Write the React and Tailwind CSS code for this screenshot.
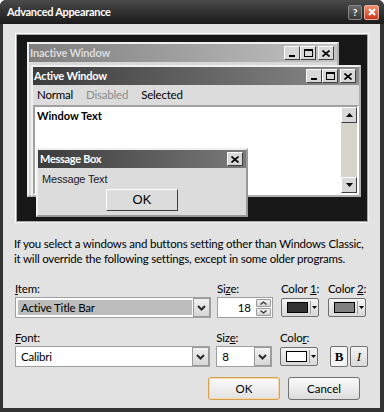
import React from 'react';

const UI = "[font-family:Lato,'Liberation_Sans',sans-serif]";
const CLASSIC = "[font-family:'Liberation_Sans',Arial,sans-serif]";

function CapBtn({ kind }) {
  return (
    <div className="flex h-[14px] w-[16px] items-center justify-center border border-t-white border-l-white border-r-[#404040] border-b-[#404040] bg-[#d8d8d8]">
      {kind === 'min' && (
        <svg width="8" height="7" viewBox="0 0 8 7">
          <rect x="1" y="5" width="6" height="2" fill="#000" />
        </svg>
      )}
      {kind === 'max' && (
        <svg width="9" height="8" viewBox="0 0 9 8">
          <rect x="0.5" y="0.5" width="8" height="7" fill="none" stroke="#000" />
          <rect x="0" y="0" width="9" height="2" fill="#000" />
        </svg>
      )}
      {kind === 'close' && (
        <svg width="8" height="7" viewBox="0 0 8 7">
          <path d="M0.5 0.5 L7.5 6.5 M7.5 0.5 L0.5 6.5" stroke="#000" strokeWidth="1.6" />
        </svg>
      )}
    </div>
  );
}

function ScrollBtn({ down }) {
  return (
    <div className="flex h-[16px] w-[16px] items-center justify-center border border-t-white border-l-white border-r-[#404040] border-b-[#404040] bg-[#d8d8d8]">
      <svg width="7" height="4" viewBox="0 0 7 4">
        <path d={down ? 'M0 0 H7 L3.5 4 Z' : 'M0 4 H7 L3.5 0 Z'} fill="#000" />
      </svg>
    </div>
  );
}

function DropBtn() {
  return (
    <div className="flex h-full w-[17px] items-center justify-center border border-[#9a9a9a] bg-gradient-to-b from-[#f2f2f2] to-[#d6d6d6]">
      <svg width="9" height="6" viewBox="0 0 9 6">
        <path d="M1 1 L4.5 4.5 L8 1" fill="none" stroke="#2a2a2a" strokeWidth="2" />
      </svg>
    </div>
  );
}

function ColorBtn({ color }) {
  return (
    <div className="flex h-[19px] w-[38px] items-center rounded-[2px] border border-[#707070] bg-gradient-to-b from-[#f4f4f4] to-[#d8d8d8] pl-[5px]">
      <div className="h-[11px] w-[21px] border border-black" style={{ background: color }} />
      <div className="ml-[2px] flex h-[13px] w-[8px] items-center justify-center border-l border-[#a0a0a0]">
        <svg width="5" height="3" viewBox="0 0 5 3">
          <path d="M0 0 H5 L2.5 3 Z" fill="#000" />
        </svg>
      </div>
    </div>
  );
}

function Label({ children }) {
  return <div className="h-[15px] whitespace-nowrap text-[11.5px] leading-[15px] tracking-[-0.2px] text-black">{children}</div>;
}

export default function App() {
  return (
    <div className={`${UI} flex h-[412px] w-[384px] flex-col overflow-hidden rounded-t-[6px] bg-[#333333]`}>
      <div className="flex h-[24px] shrink-0 items-center bg-gradient-to-b from-[#4a4a4a] to-[#1c1c1c] pl-[7px] pr-[5px]">
        <span className="text-[11px] font-bold tracking-[-0.3px] text-white">Advanced Appearance</span>
        <div className="ml-auto flex gap-[2px]">
          <div className="flex h-[15px] w-[14px] items-center justify-center rounded-[2px] border border-[#888] bg-gradient-to-b from-[#6a6a6a] to-[#3a3a3a] text-[10px] font-bold leading-none text-white">
            ?
          </div>
          <div className="flex h-[15px] w-[15px] items-center justify-center rounded-[2px] border border-[#e8b0a0] bg-gradient-to-b from-[#f09070] to-[#c83418]">
            <svg width="8" height="8" viewBox="0 0 8 8">
              <path d="M1 1 L7 7 M7 1 L1 7" stroke="#fff" strokeWidth="2" />
            </svg>
          </div>
        </div>
      </div>

      <div className="ml-[3px] mr-[4px] mb-[4px] flex flex-1 flex-col bg-[#e2e2e2] px-[12px] pt-[9px]">
        <div className="h-[190px] w-[354px] shrink-0 border border-t-white border-l-white border-r-[#f0f0f0] border-b-[#f0f0f0]">
          <div className="relative h-full w-full border border-[#a8a8a8] bg-[#171717]">
            <div className="absolute left-[10px] top-[7px] h-[155px] w-[312px] border-2 border-t-[#f0f0f0] border-l-[#f0f0f0] border-r-[#b0b0b0] border-b-[#b0b0b0] bg-[#d8d8d8]">
              <div className="flex h-[18px] items-center bg-gradient-to-r from-[#7e7e7e] to-[#c4c4c4] pl-[1px] pr-[3px]">
                <span className="text-[11px] font-bold tracking-[-0.2px] text-[#dcdcdc]">Inactive Window</span>
                <div className="ml-auto flex">
                  <CapBtn kind="min" />
                  <CapBtn kind="max" />
                  <div className="w-[2px]" />
                  <CapBtn kind="close" />
                </div>
              </div>
            </div>

            <div className="absolute left-[14px] top-[30px] flex h-[132px] w-[330px] flex-col border-2 border-t-[#f0f0f0] border-l-[#f0f0f0] border-r-[#b0b0b0] border-b-[#b0b0b0] bg-[#dcdcdc]">
              <div className="flex h-[18px] items-center bg-gradient-to-r from-[#3c3c3c] to-[#8c8c8c] pl-[1px] pr-[3px]">
                <span className="text-[11px] font-bold tracking-[-0.2px] text-white">Active Window</span>
                <div className="ml-auto flex">
                  <CapBtn kind="min" />
                  <CapBtn kind="max" />
                  <div className="w-[2px]" />
                  <CapBtn kind="close" />
                </div>
              </div>
              <div className="flex h-[20px] items-center gap-[13px] pl-[4px] text-[11.5px] tracking-[-0.2px] text-black">
                <span>Normal</span>
                <span className="text-[#8c8c8c]">Disabled</span>
                <span>Selected</span>
              </div>
              <div className="flex flex-1 border-2 border-t-[#a0a0a0] border-l-[#a0a0a0] border-r-white border-b-white bg-white">
                <div className="flex-1 pl-[2px] pt-[1px] text-[11px] font-bold text-black">Window Text</div>
                <div className="flex w-[16px] flex-col bg-[#d8d4cc]">
                  <ScrollBtn />
                  <div className="flex-1" />
                  <ScrollBtn down />
                </div>
              </div>
            </div>

            <div className="absolute left-[19px] top-[113px] flex h-[69px] w-[212px] flex-col border-2 border-t-[#f0f0f0] border-l-[#f0f0f0] border-r-[#9a9a9a] border-b-[#9a9a9a] bg-[#dcdcdc]">
              <div className="flex h-[18px] items-center bg-gradient-to-r from-[#3c3c3c] to-[#7a7a7a] pl-[2px] pr-[3px]">
                <span className="text-[11px] font-bold tracking-[-0.3px] text-white">Message Box</span>
                <div className="ml-auto">
                  <CapBtn kind="close" />
                </div>
              </div>
              <div className={`${CLASSIC} pl-[4px] pt-[4px] text-[11px] leading-[14px] tracking-[-0.2px] text-[#1a1a1a]`}>Message Text</div>
              <div className={`${CLASSIC} ml-[68px] mt-[3px] flex h-[22px] w-[72px] items-center justify-center border border-t-white border-l-white border-r-[#404040] border-b-[#404040] bg-[#dcdcdc] text-[13px] text-black`}>
                OK
              </div>
            </div>
          </div>
        </div>

        <p className="-ml-[1px] mt-[13px] whitespace-nowrap text-[11.5px] leading-[15px] tracking-[-0.2px] text-black">
          If you select a windows and buttons setting other than Windows Classic,
          <br />
          it will override the following settings, except in some older programs.
        </p>

        <div className="mt-[15px] flex">
          <div className="w-[196px]">
            <Label>
              <span className="underline">I</span>tem:
            </Label>
            <div className="mt-[1px] flex h-[21px] border border-[#a0a0a0] bg-white">
              <div className="m-[2px] mr-[1px] flex flex-1 items-center bg-[#bcbcbc] pl-[3px] text-[11.5px] tracking-[-0.2px] text-black">Active Title Bar</div>
              <DropBtn />
            </div>
          </div>
          <div className="ml-[6px] w-[56px]">
            <Label>
              Si<span className="underline">z</span>e:
            </Label>
            <div className="mt-[1px] flex h-[21px] items-center border border-[#a0a0a0] bg-white pr-[1px]">
              <span className="flex-1 pr-[5px] text-right text-[11.5px] text-black">18</span>
              <div className="flex flex-col gap-[1px]">
                {[false, true].map((down) => (
                  <div key={String(down)} className="flex h-[8px] w-[15px] items-center justify-center rounded-[1px] border border-[#9a9a9a] bg-gradient-to-b from-[#f2f2f2] to-[#d4d4d4]">
                    <svg width="7" height="4" viewBox="0 0 7 4">
                      <path d={down ? 'M0.5 0.5 L3.5 3 L6.5 0.5' : 'M0.5 3.5 L3.5 1 L6.5 3.5'} fill="none" stroke="#333" strokeWidth="1.3" />
                    </svg>
                  </div>
                ))}
              </div>
            </div>
          </div>
          <div className="ml-[8px] w-[38px]">
            <Label>
              Color <span className="underline">1</span>:
            </Label>
            <div className="mt-[2px]">
              <ColorBtn color="#333333" />
            </div>
          </div>
          <div className="ml-[9px] w-[38px]">
            <Label>
              Color <span className="underline">2</span>:
            </Label>
            <div className="mt-[2px]">
              <ColorBtn color="#808080" />
            </div>
          </div>
        </div>

        <div className="mt-[12px] flex">
          <div className="w-[196px]">
            <Label>
              <span className="underline">F</span>ont:
            </Label>
            <div className="mt-[1px] flex h-[21px] border border-[#a0a0a0] bg-white">
              <div className="flex flex-1 items-center pl-[5px] text-[11.5px] tracking-[-0.2px] text-black">Calibri</div>
              <DropBtn />
            </div>
          </div>
          <div className="ml-[6px] w-[56px]">
            <Label>
              Siz<span className="underline">e</span>:
            </Label>
            <div className="mt-[1px] flex h-[21px] border border-[#a0a0a0] bg-white">
              <div className="flex flex-1 items-center pl-[5px] text-[11.5px] text-black">8</div>
              <DropBtn />
            </div>
          </div>
          <div className="ml-[8px] w-[38px]">
            <Label>
              Colo<span className="underline">r</span>:
            </Label>
            <div className="mt-[2px]">
              <ColorBtn color="#ffffff" />
            </div>
          </div>
          <div className="ml-[12px] mt-[16px] flex gap-[2px]">
            <div className="flex h-[21px] w-[18px] items-center justify-center rounded-[2px] border border-[#707070] bg-[#f4f4f4] [font-family:'Liberation_Serif',serif] text-[13px] font-bold text-black">
              B
            </div>
            <div className="flex h-[21px] w-[18px] items-center justify-center rounded-[2px] border border-[#707070] bg-gradient-to-b from-[#f4f4f4] to-[#d8d8d8] [font-family:'Liberation_Serif',serif] text-[13px] italic text-black">
              I
            </div>
          </div>
        </div>

        <div className="mt-[10px] flex justify-end gap-[8px] pr-[8px]">
          <div className="flex h-[23px] w-[72px] items-center justify-center rounded-[3px] border border-[#d8a050] bg-gradient-to-b from-[#fbfbfb] to-[#e2e2e2] text-[11.5px] text-black shadow-[inset_0_0_0_1px_#f6d8a8]">
            OK
          </div>
          <div className="flex h-[23px] w-[72px] items-center justify-center rounded-[3px] border border-[#707070] bg-gradient-to-b from-[#fbfbfb] to-[#dcdcdc] text-[11.5px] text-black">
            Cancel
          </div>
        </div>
      </div>
    </div>
  );
}
